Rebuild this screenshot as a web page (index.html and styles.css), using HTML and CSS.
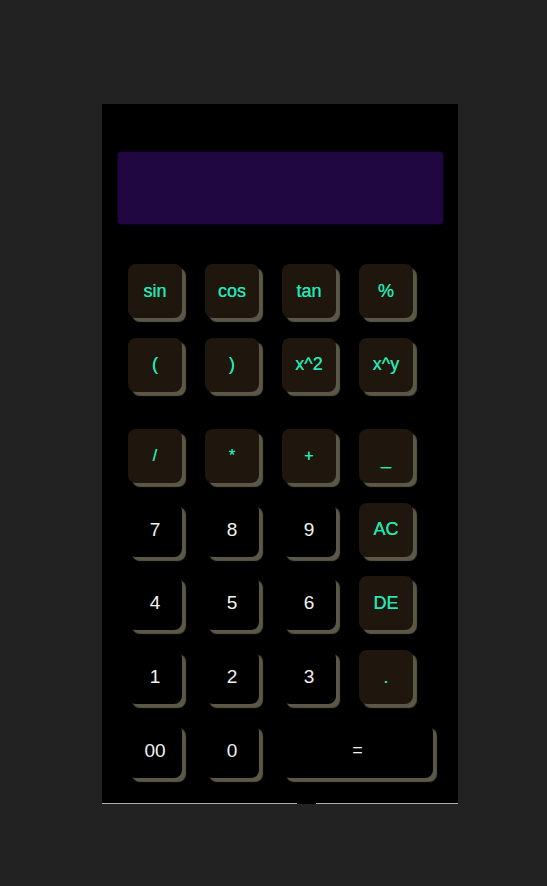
FILE: index.html
```html
<!DOCTYPE html>
<html>
<head>
<meta charset="utf-8">
<title>Calculator</title>
<link rel="stylesheet" href="styles.css">
</head>
<body>
<div class="calc">
  <div class="display"></div>
  <div class="keys sci">
    <button class="key fn">sin</button>
    <button class="key fn">cos</button>
    <button class="key fn">tan</button>
    <button class="key fn">%</button>
    <button class="key fn">(</button>
    <button class="key fn">)</button>
    <button class="key fn">x^2</button>
    <button class="key fn">x^y</button>
  </div>
  <div class="keys basic">
    <button class="key fn op">/</button>
    <button class="key fn op">*</button>
    <button class="key fn op">+</button>
    <button class="key fn op minus">_</button>
    <button class="key num">7</button>
    <button class="key num">8</button>
    <button class="key num">9</button>
    <button class="key fn">AC</button>
    <button class="key num">4</button>
    <button class="key num">5</button>
    <button class="key num">6</button>
    <button class="key fn">DE</button>
    <button class="key num">1</button>
    <button class="key num">2</button>
    <button class="key num">3</button>
    <button class="key fn">.</button>
    <button class="key num">00</button>
    <button class="key num">0</button>
    <button class="key num eq">=</button>
  </div>
  <div class="baseline">
    <span class="seg first"></span>
    <span class="seg rest"></span>
  </div>
</div>
</body>
</html>
```
FILE: styles.css
```css
html, body {
  margin: 0;
  padding: 0;
}
body {
  background: #222222;
  width: 547px;
  height: 886px;
  padding-top: 104px;
  box-sizing: border-box;
  font-family: "Liberation Sans", Arial, sans-serif;
}
.calc {
  margin-left: 102px;
  width: 356px;
  height: 700px;
  background: #000;
  box-sizing: border-box;
  padding-top: 48px;
  display: flex;
  flex-direction: column;
}
.display {
  margin-left: 16px;
  width: 325px;
  height: 72px;
  background: #200741;
  border-radius: 3px;
  box-shadow: 0 0 2px #2a0a55;
}
.keys {
  margin-left: 26px;
  display: grid;
  grid-template-columns: repeat(4, 54px);
  grid-auto-rows: 54px;
  column-gap: 23px;
  row-gap: 19.75px;
}
.sci {
  margin-top: 40px;
}
.basic {
  margin-top: 37px;
}
.key {
  border: none;
  padding: 0;
  margin: 0;
  width: 54px;
  height: 54px;
  border-radius: 8px;
  box-shadow: 4px 4px 1px #5b5847;
  font-family: "Liberation Sans", Arial, sans-serif;
  font-size: 18px;
  display: flex;
  align-items: center;
  justify-content: center;
}
.fn {
  background: #1f170d;
  color: #22e8b7;
  text-shadow: 0 0 0.4px #22e8b7;
}
.op {
  font-size: 16px;
}
.minus {
  padding-top: 5px;
  font-size: 18px;
}
.num {
  background: #000;
  color: #f2f2f2;
  font-size: 19px;
}
.eq {
  width: 151px;
  grid-column: 3 / span 2;
  font-size: 18px;
}
.baseline {
  margin-top: auto;
  height: 1px;
  display: flex;
}
.seg {
  height: 1px;
  background: #a8afbb;
}
.first {
  width: 195px;
}
.rest {
  margin-left: 19px;
  flex: 1;
}
```
